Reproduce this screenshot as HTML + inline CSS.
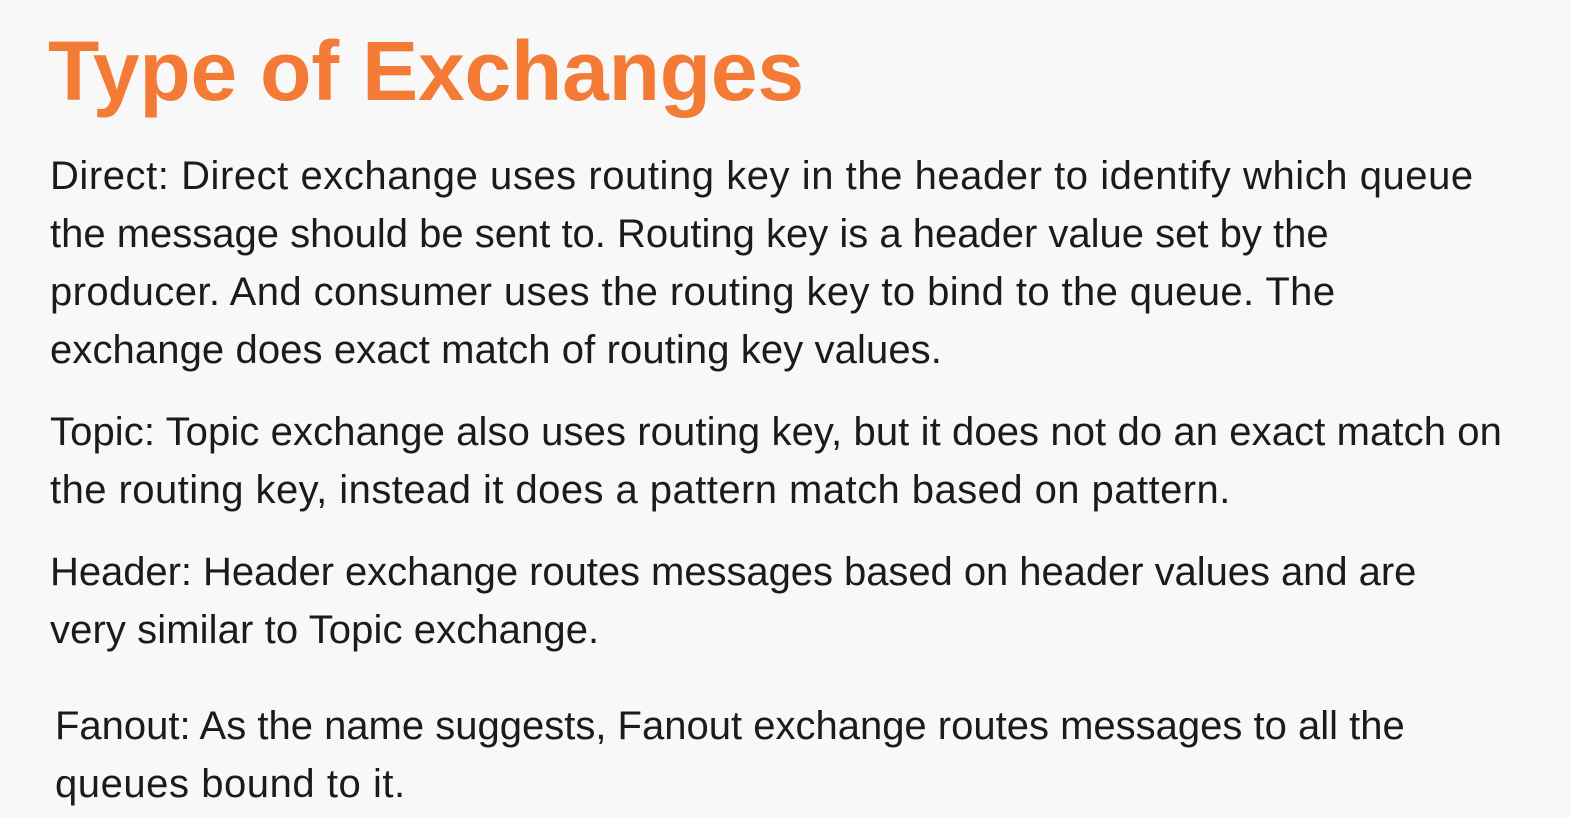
<!DOCTYPE html>
<html><head><meta charset="utf-8"><style>
html,body{margin:0;padding:0;background:#f8f8f8;width:1571px;height:817px;overflow:hidden}
.t{position:absolute;left:48px;top:26px;font:bold 84px/90px "Liberation Sans",sans-serif;color:#f47b36;letter-spacing:-0.2px;white-space:nowrap}
.p{position:absolute;font:40px/58px "Liberation Sans",sans-serif;color:#1b1b1b;white-space:nowrap;letter-spacing:0.55px}
.a{letter-spacing:0px}.b{letter-spacing:0.1px}.c{letter-spacing:-0.05px}
</style></head><body>
<div class="t">Type of Exchanges</div>
<div class="p" style="left:50px;top:147px">Direct: Direct exchange uses routing key in the header to identify which queue<br><span class="a">the message should be sent to. Routing key is a header value set by the</span><br><span style="letter-spacing:0.4px">producer. And consumer uses the routing key to bind to the queue. The</span><br><span class="b">exchange does exact match of routing key values.</span></div>
<div class="p" style="left:50px;top:403px"><span class="b">Topic: Topic exchange also uses routing key, but it does not do an exact match on</span><br><span style="letter-spacing:0.45px">the routing key, instead it does a pattern match based on pattern.</span></div>
<div class="p" style="left:50px;top:543px"><span class="c">Header: Header exchange routes messages based on header values and are</span><br><span class="b">very similar to Topic exchange.</span></div>
<div class="p" style="left:55px;top:697px"><span class="a">Fanout: As the name suggests, Fanout exchange routes messages to all the</span><br>queues bound to it.</div>
</body></html>
